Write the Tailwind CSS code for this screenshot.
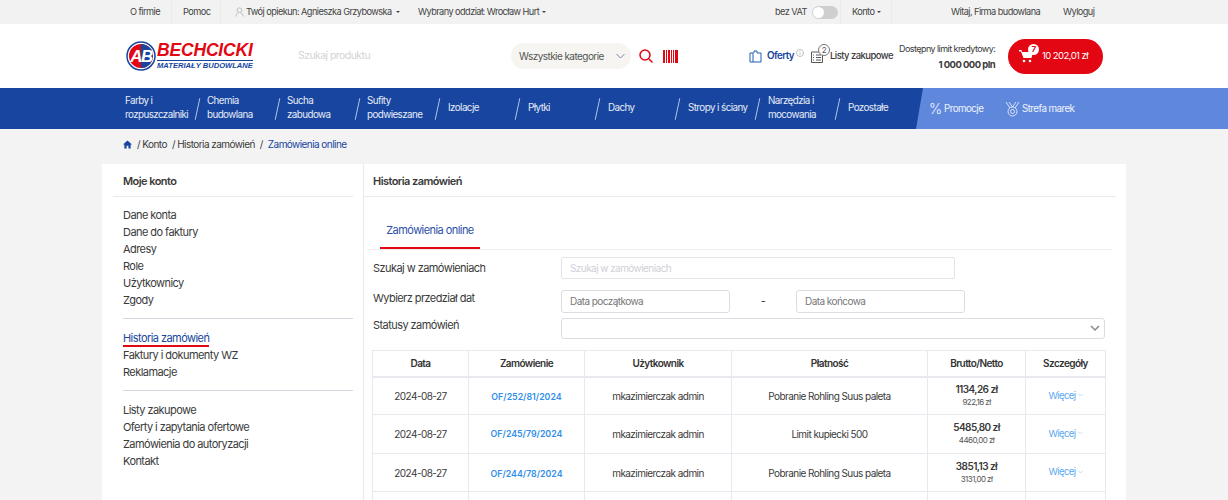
<!DOCTYPE html>
<html lang="pl">

<head>
    <meta charset="UTF-8">
    <meta name="viewport" content="width=device-width, initial-scale=1.0">
    <title>Bechcicki - Historia zamówień</title>
    <script src="https://cdn.jsdelivr.net/npm/@tailwindcss/browser@4"></script>
</head>

<body class="bg-[#f3f3f3] h-[500px] overflow-hidden font-['Inter',sans-serif] text-[#3a3a3a] tracking-[-0.035em]">
    <!-- Top bar -->
    <div class="h-6 bg-[#f2f2f2] flex items-center text-[9.2px] text-[#444] pl-[130px] whitespace-nowrap">
        <span class="w-[42px] h-full flex items-center border-r border-[#ebebeb]">O firmie</span>
        <span class="w-[49px] h-full flex items-center pl-[11px] border-r border-[#ebebeb]">Pomoc</span>
        <span class="ml-[14px] w-[183px] flex items-center gap-[2px]">
            <svg class="w-[9px] h-[10px]" viewBox="0 0 10 11" fill="none" stroke="#aaa" stroke-width="0.8"><circle cx="5" cy="3.5" r="2.6"/><path d="M1 10.5c0-2.5 1.5-3.5 3-4M9 10.5c0-2.500-1.500-3.500-3-4"/></svg>
            Twój opiekun: Agnieszka Grzybowska
            <span class="ml-[2px] border-x-[2px] border-t-[2px] border-x-transparent border-t-[#444]"></span>
        </span>
        <span class="w-[357px] flex items-center gap-[3px]">Wybrany oddział: Wrocław Hurt
            <span class="border-x-[2px] border-t-[2px] border-x-transparent border-t-[#444]"></span>
        </span>
        <span class="w-[66px] h-full flex items-center border-r border-[#ebebeb]">bez VAT
            <span class="ml-[5px] w-[26px] h-[13px] rounded-full bg-[#cfcfcf] flex items-center pl-[1px]"><span class="w-[11px] h-[11px] rounded-full bg-white"></span></span>
        </span>
        <span class="w-[51px] h-full flex items-center gap-[3px] pl-[11px] border-r border-[#ebebeb]">Konto
            <span class="border-x-[2px] border-t-[2px] border-x-transparent border-t-[#444]"></span>
        </span>
        <span class="ml-[59px] w-[112px]">Witaj, Firma budowlana</span>
        <span>Wyloguj</span>
    </div>

    <!-- Header -->
    <header class="h-16 bg-white flex items-center pl-[126px] whitespace-nowrap">
        <div class="w-[172px] flex items-center gap-[1px]">
            <svg class="w-[30px] h-[30px] shrink-0" viewBox="0 0 30 30">
                <circle cx="15" cy="15" r="14" fill="#fff" stroke="#1745a0" stroke-width="1.500"/>
                <circle cx="15" cy="15" r="12" fill="#e30613"/>
                <path d="M15 3a12 12 0 0 1 0 24z" fill="#1745a0"/>
                <text x="15" y="21" text-anchor="middle" fill="#fff" font-family="Liberation Sans" font-size="17" font-weight="700" font-style="italic" letter-spacing="-1.500">AB</text>
            </svg>
            <div class="leading-none">
                <div class="text-[#e30613] text-[17.5px] leading-[17px] font-black italic tracking-[-0.01em] font-['Liberation_Sans',sans-serif]">BECHCICKI</div>
                <div class="text-[#1745a0] text-[7.6px] leading-[9px] mt-[1px] font-bold italic tracking-[0em] font-['Liberation_Sans',sans-serif] border-t border-[#1745a0]">MATERIAŁY BUDOWLANE</div>
            </div>
        </div>
        <span class="w-[213px] text-[10.5px] text-[#d4d4d4]">Szukaj produktu</span>
        <div class="w-[120px] h-[26px] rounded-full bg-[#f6f5f1] flex items-center pl-[8px] text-[10px] text-[#555]">
            <span class="w-[97px]">Wszystkie kategorie</span>
            <svg class="w-[9px] h-[6px]" viewBox="0 0 9 6" fill="none" stroke="#7a8aa8"><path d="M.5 1l4 4 4-4"/></svg>
        </div>
        <svg class="ml-[8px] w-[14px] h-[14px]" viewBox="0 0 14 14" fill="none" stroke="#e30613" stroke-width="1.500"><circle cx="6" cy="6" r="5"/><path d="M10 10l3.500 3.500"/></svg>
        <svg class="ml-[10px] w-[15px] h-[13px]" viewBox="0 0 15 13" fill="#e30613"><path d="M0 0h2v13H0zM3 0h1v13H3zM5 0h2v13H5zM8 0h1v13H8zM10 0h1v13h-1zM12 0h3v13h-3z"/></svg>
        <svg class="ml-[71px] w-[13px] h-[13px]" viewBox="0 0 13 13" fill="none" stroke="#1f5fb8"><path d="M1 3h3v9H1zM4 12h8V3H8M5 3V1h3v2"/></svg>
        <span class="ml-[5px] w-[29px] text-[9.8px] font-semibold text-[#1745a0]">Oferty</span>
        <svg class="-mt-[7px] w-[8px] h-[8px]" viewBox="0 0 8 8" fill="none" stroke="#999" stroke-width="0.6"><circle cx="4" cy="4" r="3.500"/><path d="M4 3.500V6M4 2v.7"/></svg>
        <div class="relative ml-[7px] w-[19px] h-[13px]">
            <svg class="w-[12px] h-[13px]" viewBox="0 0 12 13" fill="none" stroke="#444" stroke-width="0.9"><path d="M.5 2h11v10.500H.5zM2 5h1M5 5h5M2 7.500h1M5 7.500h5M2 10h1M5 10h5"/></svg>
            <span class="absolute -top-[6px] left-[7px] w-[12px] h-[12px] rounded-full bg-white border border-[#777] text-[8px] leading-[10px] text-center text-[#555]">2</span>
        </div>
        <span class="w-[69px] text-[9.5px] font-medium">Listy zakupowe</span>
        <div class="w-[96px] text-right text-[9px] leading-[15px] mr-[13px] shrink-0">
            <div>Dostępny limit kredytowy:</div>
            <div class="font-bold text-[9.5px] leading-[15px] mt-[1px]">1 000 000 pln</div>
        </div>
        <div class="relative w-[95px] h-[35px] rounded-[18px] bg-[#e30613] flex items-center text-white text-[9.5px] pl-[11px] shrink-0">
            <svg class="w-[14px] h-[14px]" viewBox="0 0 14 14" fill="#fff"><path d="M0 1h2.500l.6 2H14l-1.500 6H4.500L2 2.500H0z"/><circle cx="5" cy="12" r="1.300"/><circle cx="11" cy="12" r="1.300"/></svg>
            <span class="ml-[9px]">10 202,01 zł</span>
            <span class="absolute top-[5px] left-[20px] w-[11px] h-[11px] rounded-full bg-white text-[#e30613] text-[8px] leading-[11px] text-center font-bold">7</span>
        </div>
    </header>

    <!-- Nav -->
    <nav class="relative h-[41px] bg-[#1745a0] flex items-center text-white/90 text-[9.8px] leading-[14px] pl-[125px] pb-[1px] overflow-hidden whitespace-nowrap">
        <div class="w-[82px] shrink-0">Farby i<br>rozpuszczalniki</div>
        <div class="w-[80px] shrink-0">Chemia<br>budowlana</div>
        <div class="w-[80px] shrink-0">Sucha<br>zabudowa</div>
        <div class="w-[81px] shrink-0">Sufity<br>podwieszane</div>
        <div class="w-[80px] shrink-0">Izolacje</div>
        <div class="w-[80px] shrink-0">Płytki</div>
        <div class="w-[80px] shrink-0">Dachy</div>
        <div class="w-[80px] shrink-0">Stropy i ściany</div>
        <div class="w-[80px] shrink-0">Narzędzia i<br>mocowania</div>
        <div class="w-[68px] shrink-0">Pozostałe</div>
        <div class="absolute inset-y-0 left-[916px] right-0 flex items-center bg-[#5f88dc] [clip-path:polygon(7px_0,100%_0,100%_100%,0_100%)] pl-[13px]">
            <span class="text-[14px] font-light w-[15px]">%</span><span class="w-[45px]">Promocje</span>
            <svg class="ml-[16px] w-[15px] h-[16px]" viewBox="0 0 15 16" fill="none" stroke="#fff" stroke-width="0.9" opacity="0.85"><path d="M1 1l4 6M14 1l-4 6M4 1l3.500 5M11 1L7.500 6"/><circle cx="7.500" cy="10.500" r="4.500"/><circle cx="7.500" cy="10.500" r="2"/></svg>
            <span class="ml-[2px]">Strefa marek</span>
        </div>
        <!-- separators between categories -->
        <span class="absolute left-[197px] top-[10px] h-[22px] w-px bg-white/70 rotate-[12deg]"></span>
        <span class="absolute left-[277px] top-[10px] h-[22px] w-px bg-white/70 rotate-[12deg]"></span>
        <span class="absolute left-[357px] top-[10px] h-[22px] w-px bg-white/70 rotate-[12deg]"></span>
        <span class="absolute left-[437px] top-[10px] h-[22px] w-px bg-white/70 rotate-[12deg]"></span>
        <span class="absolute left-[517px] top-[10px] h-[22px] w-px bg-white/70 rotate-[12deg]"></span>
        <span class="absolute left-[597px] top-[10px] h-[22px] w-px bg-white/70 rotate-[12deg]"></span>
        <span class="absolute left-[677px] top-[10px] h-[22px] w-px bg-white/70 rotate-[12deg]"></span>
        <span class="absolute left-[757px] top-[10px] h-[22px] w-px bg-white/70 rotate-[12deg]"></span>
        <span class="absolute left-[837px] top-[10px] h-[22px] w-px bg-white/70 rotate-[12deg]"></span>
    </nav>

    <!-- Breadcrumb -->
    <div class="h-[35px] pb-[4px] flex items-center pl-[123px] gap-[5px] text-[10px]">
        <svg class="w-[9px] h-[9px]" viewBox="0 0 10 10" fill="#1745a0"><path d="M5 .5 0 5h1.500v4.500h2.500V6.500h2v3h2.500V5H10z"/></svg>
        <span>/ Konto</span><span>/ Historia zamówień</span><span>/</span><span class="text-[#1745a0]">Zamówienia online</span>
    </div>

    <!-- Card -->
    <main class="ml-[102px] w-[1024px] bg-white h-[336px] flex overflow-hidden">
        <!-- Sidebar -->
        <aside class="w-[262px] shrink-0 border-r border-[#e8e9f0] pl-[11px] pr-[10px]">
            <div class="h-[33px] pt-[2px] border-b border-[#e8e9f0] pl-[10px] flex items-center text-[11px] font-semibold">Moje konto</div>
            <ul class="mt-[10px] pl-[10px] text-[11px] leading-[17px] pb-[9px]">
                <li>Dane konta</li>
                <li>Dane do faktury</li>
                <li>Adresy</li>
                <li>Role</li>
                <li>Użytkownicy</li>
                <li>Zgody</li>
            </ul>
            <div class="ml-[10px] border-t border-[#d5d6de]"></div>
            <ul class="mt-[11px] pl-[10px] text-[11px] leading-[17px] pb-[9px]">
                <li><span class="text-[#1745a0] border-b-2 border-[#e30613]">Historia zamówień</span></li>
                <li>Faktury i dokumenty WZ</li>
                <li>Reklamacje</li>
            </ul>
            <div class="ml-[10px] border-t border-[#d5d6de]"></div>
            <ul class="mt-[11px] pl-[10px] text-[11px] leading-[17px]">
                <li>Listy zakupowe</li>
                <li>Oferty i zapytania ofertowe</li>
                <li>Zamówienia do autoryzacji</li>
                <li>Kontakt</li>
            </ul>
        </aside>

        <!-- Content -->
        <section class="flex-1 min-w-0">
            <div class="h-[33px] pt-[2px] w-[752px] border-b border-[#e8e9f0] pl-[9px] flex items-center text-[11px] font-semibold">Historia zamówień</div>
            <div class="w-[745px] ml-[3px] h-[53px] border-b border-[#eee] pl-[13px] flex items-end">
                <span class="h-[37px] w-[100px] pt-[10px] text-center border-b-2 border-[#e30613] text-[#2c50a8] text-[11px]">Zamówienia online</span>
            </div>
            <div class="pl-[9px] text-[11px]">
                <div class="flex items-center h-[22px] mt-[7px]">
                    <span class="w-[188px]">Szukaj w zamówieniach</span>
                    <span class="w-[394px] h-[22px] border border-[#e2e3e8] flex items-center pl-[8px] rounded-[2px] text-[10px] text-[#cfd0d8]">Szukaj w zamówieniach</span>
                </div>
                <div class="flex items-center h-[23px] mt-[11px]">
                    <span class="w-[188px] -mt-[6px]">Wybierz przedział dat</span>
                    <span class="w-[169px] h-[23px] border border-[#dcdde2] flex items-center pl-[8px] rounded-[3px] text-[10px] text-[#777]">Data początkowa</span>
                    <span class="w-[66px] text-center">-</span>
                    <span class="w-[169px] h-[23px] border border-[#dcdde2] flex items-center pl-[8px] rounded-[3px] text-[10px] text-[#777]">Data końcowa</span>
                </div>
                <div class="flex items-center h-[21px] mt-[5px]">
                    <span class="w-[188px] -mt-[7px]">Statusy zamówień</span>
                    <span class="w-[544px] h-[21px] border border-[#dcdde2] rounded-[3px] flex items-center justify-end pr-[4px]">
                        <svg class="w-[10px] h-[7px]" viewBox="0 0 10 7" fill="none" stroke="#888" stroke-width="1.500"><path d="M1 1l4 4 4-4"/></svg>
                    </span>
                </div>

                <!-- Table -->
                <table class="mt-[11px] -ml-[1px] w-[733px] table-fixed border-collapse text-[10px] text-center">
                    <colgroup>
                        <col class="w-[96px]"><col class="w-[116px]"><col class="w-[147px]"><col class="w-[196px]"><col class="w-[98px]"><col class="w-[80px]">
                    </colgroup>
                    <thead class="text-[#333]">
                        <tr class="h-[26px] border-b-2 border-[#e8e9ee]">
                            <th class="border border-[#e8e9ee] font-semibold">Data</th>
                            <th class="border border-[#e8e9ee] font-semibold">Zamówienie</th>
                            <th class="border border-[#e8e9ee] font-semibold">Użytkownik</th>
                            <th class="border border-[#e8e9ee] font-semibold">Płatność</th>
                            <th class="border border-[#e8e9ee] font-semibold">Brutto/Netto</th>
                            <th class="border border-[#e8e9ee] font-semibold">Szczegóły</th>
                        </tr>
                    </thead>
                    <tbody>
                        <tr class="h-[38px]">
                            <td class="border border-[#e8e9ee] pt-[2px]">2024-08-27</td>
                            <td class="border border-[#e8e9ee] pt-[2px] text-[#2f8fe8] font-semibold text-[8.8px] tracking-normal">OF/252/81/2024</td>
                            <td class="border border-[#e8e9ee] pt-[2px]">mkazimierczak admin</td>
                            <td class="border border-[#e8e9ee] pt-[2px]">Pobranie Rohling Suus paleta</td>
                            <td class="border border-[#e8e9ee] leading-[13px]"><div class="font-semibold">1134,26 zł</div><div class="text-[8px] text-[#555]">922,16 zł</div></td>
                            <td class="border border-[#e8e9ee] text-[#5aa8f0] text-[9.5px]">Więcej <svg class="inline w-[5px] h-[4px] mb-[2px]" viewBox="0 0 5 4" fill="none" stroke="#a8cdf5" stroke-width="0.7"><path d="M.3.8l2.200 2.200L4.700.8"/></svg></td>
                        </tr>
                        <tr class="h-[39px]">
                            <td class="border border-[#e8e9ee]">2024-08-27</td>
                            <td class="border border-[#e8e9ee] text-[#2f8fe8] font-semibold text-[8.8px] tracking-normal">OF/245/79/2024</td>
                            <td class="border border-[#e8e9ee]">mkazimierczak admin</td>
                            <td class="border border-[#e8e9ee]">Limit kupiecki 500</td>
                            <td class="border border-[#e8e9ee] leading-[13px]"><div class="font-semibold">5485,80 zł</div><div class="text-[8px] text-[#555]">4460,00 zł</div></td>
                            <td class="border border-[#e8e9ee] text-[#5aa8f0] text-[9.5px]">Więcej <svg class="inline w-[5px] h-[4px] mb-[2px]" viewBox="0 0 5 4" fill="none" stroke="#a8cdf5" stroke-width="0.7"><path d="M.3.8l2.200 2.200L4.700.8"/></svg></td>
                        </tr>
                        <tr class="h-[38px]">
                            <td class="border border-[#e8e9ee] pt-[2px]">2024-08-27</td>
                            <td class="border border-[#e8e9ee] pt-[2px] text-[#2f8fe8] font-semibold text-[8.8px] tracking-normal">OF/244/78/2024</td>
                            <td class="border border-[#e8e9ee] pt-[2px]">mkazimierczak admin</td>
                            <td class="border border-[#e8e9ee] pt-[2px]">Pobranie Rohling Suus paleta</td>
                            <td class="border border-[#e8e9ee] leading-[13px]"><div class="font-semibold">3851,13 zł</div><div class="text-[8px] text-[#555]">3131,00 zł</div></td>
                            <td class="border border-[#e8e9ee] text-[#5aa8f0] text-[9.5px]">Więcej <svg class="inline w-[5px] h-[4px] mb-[2px]" viewBox="0 0 5 4" fill="none" stroke="#a8cdf5" stroke-width="0.7"><path d="M.3.8l2.200 2.200L4.700.8"/></svg></td>
                        </tr>
                        <tr class="h-[38px]">
                            <td class="border border-[#e8e9ee]"></td><td class="border border-[#e8e9ee]"></td><td class="border border-[#e8e9ee]"></td><td class="border border-[#e8e9ee]"></td><td class="border border-[#e8e9ee]"></td><td class="border border-[#e8e9ee]"></td>
                        </tr>
                    </tbody>
                </table>
            </div>
        </section>
    </main>
</body>

</html>
